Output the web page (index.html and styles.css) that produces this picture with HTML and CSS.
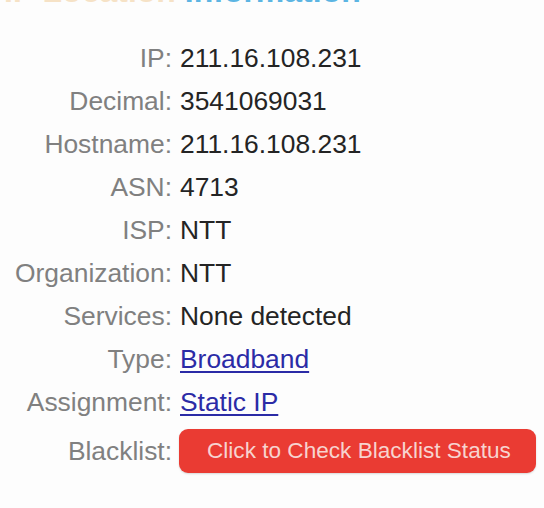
FILE: index.html
```html
<!DOCTYPE html>
<html>
<head>
<meta charset="utf-8">
<link rel="stylesheet" href="styles.css">
</head>
<body>
<div class="page">
  <h2 class="title"><span class="title-a">IP Location</span> <span class="title-b">Information</span></h2>
  <div class="info">
    <div class="label">IP:</div><div class="value">211.16.108.231</div>
    <div class="label">Decimal:</div><div class="value">3541069031</div>
    <div class="label">Hostname:</div><div class="value">211.16.108.231</div>
    <div class="label">ASN:</div><div class="value">4713</div>
    <div class="label">ISP:</div><div class="value">NTT</div>
    <div class="label">Organization:</div><div class="value">NTT</div>
    <div class="label">Services:</div><div class="value">None detected</div>
    <div class="label">Type:</div><div class="value"><a href="#">Broadband</a></div>
    <div class="label">Assignment:</div><div class="value"><a href="#">Static IP</a></div>
    <div class="label label-bl">Blacklist:</div><div class="value value-bl"><button class="btn">Click to Check Blacklist Status</button></div>
  </div>
</div>
</body>
</html>
```
FILE: styles.css
```css
html, body {
  margin: 0;
  padding: 0;
  background: #fdfdfd;
}
.page {
  font-family: "Liberation Sans", Arial, sans-serif;
  overflow: hidden;
  height: 508px;
}
.title {
  margin: -25px 0 0 0;
  height: 32px;
  line-height: 32px;
  font-size: 32px;
  font-weight: bold;
  white-space: nowrap;
  padding-left: 4px;
}
.title-a { color: #f6e2c6; }
.title-b { color: #5cb5e3; }
.info {
  display: grid;
  grid-template-columns: 172px 1fr;
  column-gap: 8px;
  margin-top: 30px;
  font-size: 26.4px;
}
.label, .value {
  height: 43px;
  line-height: 43px;
  white-space: nowrap;
}
.label {
  text-align: right;
  color: #808080;
}
.value {
  color: #242424;
}
.value a {
  color: #2b2ba6;
  text-decoration: underline;
  text-decoration-thickness: 2px;
  text-underline-offset: 3px;
}
.label-bl {
  margin-top: 5px;
  height: 44px;
  line-height: 44px;
}
.value-bl {
  margin-top: 5px;
  height: 44px;
  line-height: 44px;
  margin-left: -1px;
}
.btn {
  display: block;
  height: 44px;
  padding: 0 25px 0 28px;
  border: none;
  border-radius: 9px;
  background: #ea3b33;
  color: #f7d3cf;
  font-family: "Liberation Sans", Arial, sans-serif;
  font-size: 22.6px;
  box-shadow: 0 1px 2px rgba(0,0,0,0.15);
}
```
